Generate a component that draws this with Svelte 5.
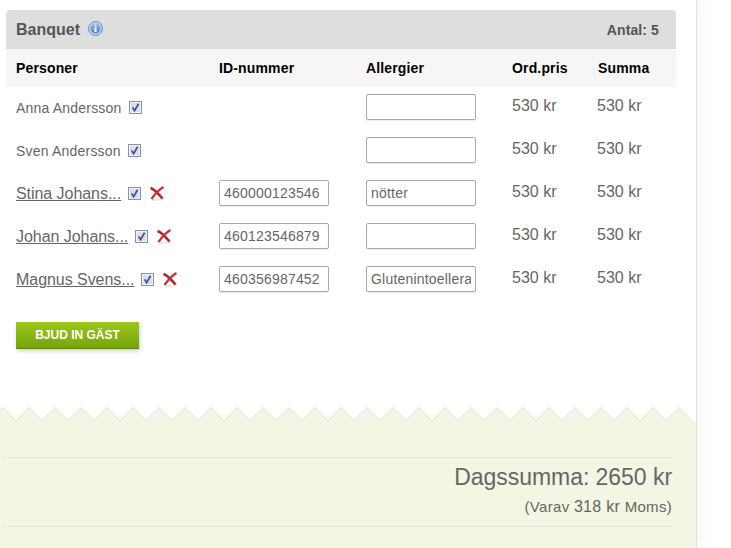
<script>
  const guests = [
    { name: 'Anna Andersson', allergy: '' },
    { name: 'Sven Andersson', allergy: '' },
    { name: 'Stina Johans...', id: '460000123546', allergy: 'nötter', extra: true },
    { name: 'Johan Johans...', id: '460123546879', allergy: '', extra: true },
    { name: 'Magnus Svens...', id: '460356987452', allergy: 'Glutenintoellera', extra: true }
  ];

  // zigzag edge of the summary block, one tooth every 26px
  let edge = 'M0 14 L0 3';
  for (let x = 3; x < 696; x += 26) {
    edge += ` L${x} 0.5 L${x + 13} 13.5`;
  }
  const outline = edge.slice(edge.indexOf('L'));
  edge += ' L696 14 Z';
</script>

<div class="page">
  <div class="main">
    <section class="panel">
      <header class="title">
        <h2>Banquet</h2>
        <svg class="info" width="15" height="15" viewBox="0 0 15 15">
          <defs>
            <linearGradient id="infoFill" x1="0" y1="0" x2="0" y2="1">
              <stop offset="0" stop-color="#8fb4e4" />
              <stop offset="1" stop-color="#4f82c6" />
            </linearGradient>
          </defs>
          <circle cx="7.5" cy="7.5" r="6.9" fill="#c9daf0" stroke="#5a8ac6" />
          <circle cx="7.5" cy="7.5" r="5" fill="url(#infoFill)" />
          <rect x="6.5" y="6.4" width="2" height="4.6" fill="#fff" />
          <rect x="6.5" y="3.6" width="2" height="1.8" fill="#fff" />
        </svg>
        <span class="count">Antal: 5</span>
      </header>

      <div class="row head">
        <div>Personer</div>
        <div>ID-nummer</div>
        <div>Allergier</div>
        <div>Ord.pris</div>
        <div>Summa</div>
      </div>

      {#each guests as g}
        <div class="row">
          <div class="person">
            {#if g.extra}
              <a href="#guest" class="guest">{g.name}</a>
            {:else}
              <span class="plain">{g.name}</span>
            {/if}
            <svg class="check" width="13" height="13" viewBox="0 0 13 13">
              <rect x="0.5" y="0.5" width="12" height="12" fill="#e6e8f0" stroke="#8f9196" />
              <rect x="1.5" y="1.5" width="10" height="10" fill="#d9deec" stroke="#f2f3f7" />
              <path d="M3.6 6.4 L5.6 9.6 L9.6 2.8" fill="none" stroke="#3d50a0" stroke-width="1.7" />
            </svg>
            {#if g.extra}
              <svg class="remove" width="16" height="15" viewBox="0 0 16 15">
                <path d="M3 14 L15 13" stroke="#000" stroke-opacity="0.1" stroke-width="2" />
                <path d="M1.5 2 C6 3.5 9.5 8 13.5 12.5" fill="none" stroke="#b3262b" stroke-width="2.5" />
                <path d="M14.5 1 C10 3.5 6 8 2.5 13" fill="none" stroke="#c4353a" stroke-width="2.3" />
              </svg>
            {/if}
          </div>
          <div>
            {#if g.id}<input class="field" type="text" value={g.id} />{/if}
          </div>
          <div><input class="field" type="text" value={g.allergy} /></div>
          <div class="price">530 kr</div>
          <div class="price sum">530 kr</div>
        </div>
      {/each}
    </section>

    <button class="invite" type="button">BJUD IN GÄST</button>
  </div>

  <svg class="teeth" width="696" height="14" viewBox="0 0 696 14">
    <path d={edge} fill="#f2f6e3" />
    <path d={'M0 3 ' + outline} fill="none" stroke="#e0e3d4" />
  </svg>

  <section class="total">
    <div class="box">
      <div class="day">Dagssumma: 2650 kr</div>
      <div class="vat">(Varav <b>318 kr</b> Moms)</div>
    </div>
  </section>
</div>

<style>
  :global(body) {
    background: #fff;
    overflow: hidden;
  }

  .page {
    width: 696px;
    height: 548px;
    overflow: hidden;
    border-right: 1px solid #e2e2e2;
    box-shadow: 3px 0 12px rgba(0, 0, 0, 0.05);
    font-family: "Liberation Sans", Arial, sans-serif;
    color: #666;
    display: flex;
    flex-direction: column;
  }

  .main {
    padding: 10px 20px 0 6px;
    height: 407px;
    box-sizing: border-box;
    flex: none;
  }

  .title {
    height: 39px;
    background: #dedede;
    border-radius: 4px 4px 0 0;
    display: flex;
    align-items: center;
    gap: 8px;
    padding: 0 17px 0 10px;
    color: #555;
  }

  .title h2 {
    margin: 0;
    font-size: 16px;
    font-weight: bold;
  }

  .info {
    margin-top: -2px;
  }

  .count {
    margin-left: auto;
    font-size: 14px;
    font-weight: bold;
    letter-spacing: 0.1px;
  }

  .row {
    display: grid;
    grid-template-columns: 203px 147px 146px 86px 1fr;
    align-items: center;
    height: 43px;
    box-sizing: border-box;
    padding: 0 0 3px 10px;
    font-size: 14px;
  }

  .row.head {
    height: 38px;
    padding-bottom: 0;
    background: #f6f6f6;
    color: #000;
    font-weight: bold;
    letter-spacing: 0.15px;
  }

  .person {
    display: flex;
    align-items: center;
    gap: 7px;
  }

  .plain,
  .guest {
    margin-top: 2px;
  }

  .plain {
    letter-spacing: 0.2px;
  }

  .guest {
    font-size: 16px;
    letter-spacing: -0.05px;
    color: #666;
  }

  .remove {
    margin-left: 1px;
  }

  .field {
    display: block;
    width: 110px;
    height: 26px;
    box-sizing: border-box;
    padding: 0 4px;
    border: 1px solid #a9a9a9;
    border-radius: 2px;
    box-shadow: 0 1px 1px rgba(0, 0, 0, 0.08);
    font: 14px "Liberation Sans", Arial, sans-serif;
    letter-spacing: 0.2px;
    color: #666;
    background: #fff;
  }

  .price {
    font-size: 16px;
    margin-top: -3px;
  }

  .price.sum {
    margin-left: -1px;
  }

  .invite {
    display: block;
    margin: 20px 0 0 10px;
    width: 123px;
    height: 27px;
    padding: 0;
    border: 0;
    border-bottom: 1px solid #5f8a08;
    background: linear-gradient(#9ac61d, #75a50b);
    box-shadow: 1px 2px 4px rgba(0, 0, 0, 0.2);
    color: #fff;
    font: bold 12px "Liberation Sans", Arial, sans-serif;
  }

  .teeth {
    display: block;
    flex: none;
  }

  .total {
    flex: 1;
    background: #f2f6e3;
    padding: 36px 24px 0 3px;
  }

  .box {
    height: 70px;
    box-sizing: border-box;
    border-top: 1px solid #e3e5de;
    border-bottom: 1px solid #e3e5de;
    text-align: right;
  }

  .day {
    margin-top: 5px;
    font-size: 23px;
    line-height: 28px;
    letter-spacing: -0.05px;
    color: #666;
  }

  .vat {
    margin-top: 7px;
    font-size: 15px;
    line-height: 18px;
    letter-spacing: 0.3px;
  }

  .vat b {
    font-weight: normal;
    font-size: 16px;
  }
</style>
